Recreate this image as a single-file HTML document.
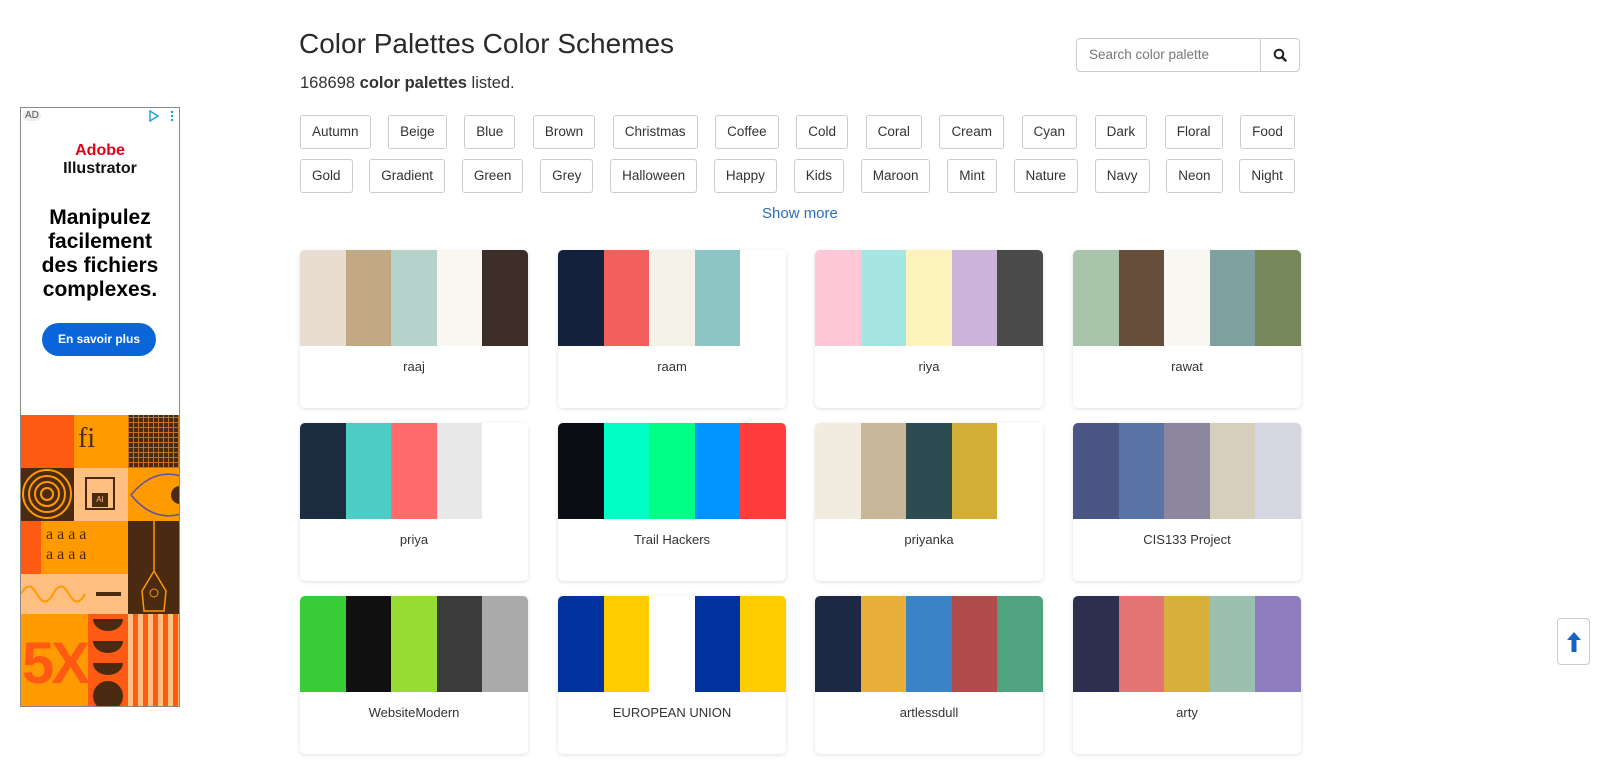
<!DOCTYPE html>
<html><head><meta charset="utf-8"><style>
*{box-sizing:border-box;margin:0;padding:0}
body{width:1600px;height:765px;overflow:hidden;background:#fff;font-family:"Liberation Sans","DejaVu Sans",sans-serif;color:#212529;position:relative}
.a{position:absolute}
h1{position:absolute;left:299px;top:28px;font-size:28px;font-weight:400;color:#2a2a2a}
.sub{position:absolute;left:300px;top:74px;font-size:16.5px;color:#333}
.tags{position:absolute;left:300px;width:995px;display:flex;justify-content:space-between}
.tags span{border:1px solid #ccc;border-radius:3px;height:34px;line-height:32px;padding:0 11px;font-size:13.5px;color:#333}
.show{position:absolute;left:762px;top:205px;font-size:15px;color:#2a6ebb}
.card{position:absolute;width:228px;height:158px;border-radius:5px;overflow:hidden;box-shadow:0 1px 4px rgba(0,0,0,.13);background:#fff}
.card .c{display:flex;height:96px}
.card .c i{flex:1}
.card p{text-align:center;font-size:13px;color:#333;margin-top:13px}
.search{position:absolute;left:1076px;top:38px;width:224px;height:34px;border:1px solid #ccc;border-radius:4px;display:flex}
.search div{flex:1;font-size:13.5px;color:#777;padding:8px 12px}
.search b{width:39px;border-left:1px solid #ccc;display:flex;align-items:center;justify-content:center}
</style></head><body>
<h1>Color Palettes Color Schemes</h1>
<div class="sub">168698 <b>color palettes</b> listed.</div>
<div class="search"><div>Search color palette</div><b><svg width="14" height="14" viewBox="0 0 14 14"><circle cx="6" cy="6" r="4.3" fill="none" stroke="#222" stroke-width="2"/><path d="M9 9l3.5 3.5" stroke="#222" stroke-width="2.4" stroke-linecap="round"/></svg></b></div>
<div class="tags" style="top:115px"><span>Autumn</span><span>Beige</span><span>Blue</span><span>Brown</span><span>Christmas</span><span>Coffee</span><span>Cold</span><span>Coral</span><span>Cream</span><span>Cyan</span><span>Dark</span><span>Floral</span><span>Food</span></div>
<div class="tags" style="top:159px"><span>Gold</span><span>Gradient</span><span>Green</span><span>Grey</span><span>Halloween</span><span>Happy</span><span>Kids</span><span>Maroon</span><span>Mint</span><span>Nature</span><span>Navy</span><span>Neon</span><span>Night</span></div>
<div class="show">Show more</div>

<div class="card" style="left:300px;top:250px"><div class="c"><i style="background:#e8ddd0"></i><i style="background:#c2a985"></i><i style="background:#b5d3cb"></i><i style="background:#faf7f0"></i><i style="background:#3d2f27"></i></div><p>raaj</p></div>
<div class="card" style="left:558px;top:250px"><div class="c"><i style="background:#14213d"></i><i style="background:#f25f5c"></i><i style="background:#f4f1e8"></i><i style="background:#8cc5c4"></i><i style="background:#fff"></i></div><p>raam</p></div>
<div class="card" style="left:815px;top:250px"><div class="c"><i style="background:#ffc8d8"></i><i style="background:#a5e6e3"></i><i style="background:#fdf4bd"></i><i style="background:#cdb4db"></i><i style="background:#4a4a4a"></i></div><p>riya</p></div>
<div class="card" style="left:1073px;top:250px"><div class="c"><i style="background:#a8c5ab"></i><i style="background:#674e3a"></i><i style="background:#f9f7f1"></i><i style="background:#7ea1a0"></i><i style="background:#77895b"></i></div><p>rawat</p></div>

<div class="card" style="left:300px;top:423px"><div class="c"><i style="background:#1d2d41"></i><i style="background:#4ecdc4"></i><i style="background:#ff6b6b"></i><i style="background:#e8e8e8"></i><i style="background:#fff"></i></div><p>priya</p></div>
<div class="card" style="left:558px;top:423px"><div class="c"><i style="background:#0b0d14"></i><i style="background:#00ffc5"></i><i style="background:#00ff85"></i><i style="background:#0094ff"></i><i style="background:#ff3d3d"></i></div><p>Trail Hackers</p></div>
<div class="card" style="left:815px;top:423px"><div class="c"><i style="background:#f2ebe0"></i><i style="background:#c8b798"></i><i style="background:#2c4c52"></i><i style="background:#d4af37"></i><i style="background:#fff"></i></div><p>priyanka</p></div>
<div class="card" style="left:1073px;top:423px"><div class="c"><i style="background:#4c5685"></i><i style="background:#5a74a6"></i><i style="background:#8e87a0"></i><i style="background:#d6cfbc"></i><i style="background:#d5d6e1"></i></div><p>CIS133 Project</p></div>

<div class="card" style="left:300px;top:596px"><div class="c"><i style="background:#38cc38"></i><i style="background:#101010"></i><i style="background:#96dc32"></i><i style="background:#3c3c3c"></i><i style="background:#aaa"></i></div><p>WebsiteModern</p></div>
<div class="card" style="left:558px;top:596px"><div class="c"><i style="background:#0033a0"></i><i style="background:#ffcc00"></i><i style="background:#fff"></i><i style="background:#0033a0"></i><i style="background:#ffcc00"></i></div><p>EUROPEAN UNION</p></div>
<div class="card" style="left:815px;top:596px"><div class="c"><i style="background:#1e2a45"></i><i style="background:#e8b038"></i><i style="background:#3a84c6"></i><i style="background:#b24b4b"></i><i style="background:#50a37f"></i></div><p>artlessdull</p></div>
<div class="card" style="left:1073px;top:596px"><div class="c"><i style="background:#2d2f4f"></i><i style="background:#e47474"></i><i style="background:#d6b03a"></i><i style="background:#9cc0b0"></i><i style="background:#8e7cbf"></i></div><p>arty</p></div>

<div class="a" style="left:1557px;top:618px;width:33px;height:47px;border:1px solid #ccc;border-radius:4px;background:#fff"><svg class="a" style="left:8px;top:12px" width="16" height="22" viewBox="0 0 16 22"><path d="M8 1L15 9H10.5V21H5.5V9H1Z" fill="#1565c0"/></svg></div>

<div class="a" style="left:20px;top:107px;width:160px;height:600px;border:1px solid #888;background:#fff;overflow:hidden">
 <div class="a" style="left:2px;top:2px;font-size:10px;color:#555;background:#eee;border-radius:6px;padding:0 2px">AD</div>
 <svg class="a" style="left:127px;top:2px" width="30" height="12"><path d="M2 1L10 6L2 11Z" fill="none" stroke="#1ca0d0" stroke-width="1.4"/><circle cx="24" cy="2" r="1.2" fill="#1ca0d0"/><circle cx="24" cy="6" r="1.2" fill="#1ca0d0"/><circle cx="24" cy="10" r="1.2" fill="#1ca0d0"/></svg>
 <div class="a" style="left:0;width:158px;top:35px;text-align:center;font-weight:700;font-size:16px;line-height:16px;color:#e0001a">Adobe</div>
 <div class="a" style="left:0;width:158px;top:52px;text-align:center;font-weight:700;font-size:16px;line-height:17px;color:#111">Illustrator</div>
 <div class="a" style="left:0;width:158px;top:98px;text-align:center;font-weight:700;font-size:21px;line-height:24px;color:#000">Manipulez<br>facilement<br>des fichiers<br>complexes.</div>
 <div class="a" style="left:21px;top:215px;width:114px;height:33px;border-radius:17px;background:#0a66d8;color:#fff;font-size:12px;font-weight:700;text-align:center;line-height:33px">En savoir plus</div>
 <div class="a" style="left:0;top:307px;width:160px;height:300px;background:#ff9a00">
  <div class="a" style="left:0;top:0;width:53px;height:53px;background:#ff5a14"></div>
  <div class="a" style="left:107px;top:0;width:53px;height:53px;background:#4a2a10;background-image:repeating-linear-gradient(0deg,#c07020 0 1px,transparent 1px 5px),repeating-linear-gradient(90deg,#c07020 0 1px,transparent 1px 5px)"></div>
  <div class="a" style="left:57px;top:8px;font-family:'Liberation Serif',serif;font-size:28px;color:#4a2a10">fi</div>
  <div class="a" style="left:0;top:53px;width:53px;height:53px;background:#4a2a10"><svg width="53" height="53"><g fill="none" stroke="#ff9a00" stroke-width="2"><circle cx="26" cy="26" r="24"/><circle cx="26" cy="26" r="18"/><circle cx="26" cy="26" r="12"/><circle cx="26" cy="26" r="6"/></g></svg></div>
  <div class="a" style="left:53px;top:53px;width:54px;height:53px;background:#ffbf80"><div class="a" style="left:11px;top:9px;width:30px;height:33px;border:2px solid #4a2a10;background:#ffbf80"></div><div class="a" style="left:18px;top:25px;width:16px;height:14px;background:#4a2a10;color:#ffbf80;font-size:8px;text-align:center;line-height:14px">AI</div></div>
  <div class="a" style="left:107px;top:53px;width:53px;height:53px;background:#ff9a00"><svg width="53" height="53"><path d="M3 27Q25 0 53 8M3 27Q25 54 53 46" fill="none" stroke="#6050a0" stroke-width="1.5"/><circle cx="52" cy="27" r="9" fill="#4a2a10"/></svg></div>
  <div class="a" style="left:0;top:106px;width:20px;height:53px;background:#ff5a14"></div>
  <div class="a" style="left:25px;top:110px;font-family:'Liberation Serif',serif;font-size:16px;line-height:20px;color:#4a2a10">a a a a<br>a a a a</div>
  <div class="a" style="left:107px;top:106px;width:53px;height:93px;background:#4a2a10"><svg width="53" height="93"><path d="M26 0V50M26 50L14 70L16 90H36L38 70Z" fill="none" stroke="#ff9a00" stroke-width="1.5"/><circle cx="26" cy="72" r="4" fill="none" stroke="#ff9a00"/></svg></div>
  <div class="a" style="left:0;top:159px;width:107px;height:40px;background:#ffbf80"><svg width="107" height="40"><path d="M0 20Q8 5 16 20T32 20T48 20T64 20" fill="none" stroke="#ff9a00" stroke-width="2"/><path d="M75 20H100" stroke="#4a2a10" stroke-width="4"/></svg></div>
  <div class="a" style="left:0;top:199px;width:67px;height:100px;background:#ff9a00;color:#ff5a14;font-family:'Liberation Sans Narrow','Liberation Sans',sans-serif;font-weight:700;font-size:58px;line-height:100px;text-align:center;letter-spacing:-3px">5X</div>
  <div class="a" style="left:67px;top:199px;width:40px;height:100px;background:#ff5a14"><svg width="40" height="100"><g fill="#4a2a10"><path d="M5 5H35A15 12 0 0 1 5 5Z"/><path d="M5 27H35A15 12 0 0 1 5 27Z"/><path d="M5 49H35A15 12 0 0 1 5 49Z"/><circle cx="20" cy="82" r="15"/></g></svg></div>
  <div class="a" style="left:107px;top:199px;width:53px;height:100px;background:#ffbf80;background-image:repeating-linear-gradient(90deg,transparent 0 5px,#ff5a14 5px 10px)"></div>
 </div>
</div>
</body></html>
